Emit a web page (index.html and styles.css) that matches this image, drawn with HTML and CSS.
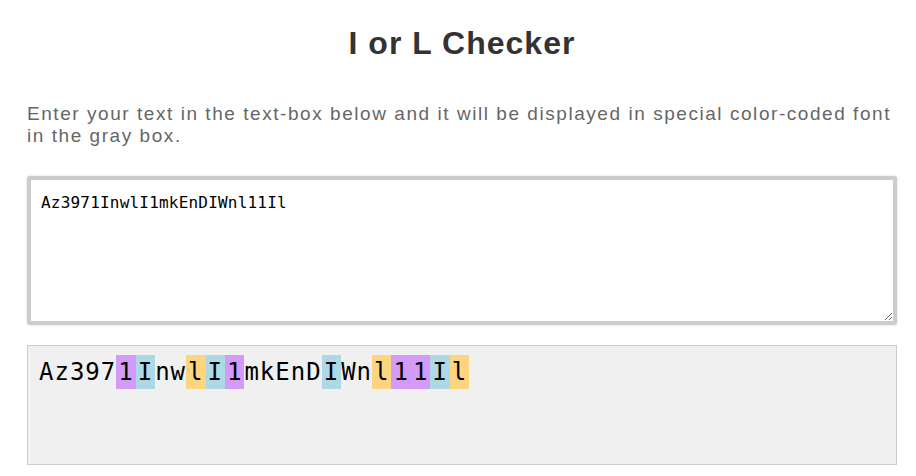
FILE: index.html
```html
<!DOCTYPE html>
<html lang="en">
<head>
<meta charset="utf-8">
<title>I or L Checker</title>
<link rel="stylesheet" href="styles.css">
</head>
<body>
<div class="page">
  <h1 class="title">I or L Checker</h1>
  <p class="intro">Enter your text in the text-box below and it will be displayed in special color-coded font in the gray box.</p>
  <textarea class="input" spellcheck="false">Az3971InwlI1mkEnDIWnl11Il</textarea>
  <div class="output">Az397<span class="one">1</span><span class="eye">I</span>nw<span class="ell">l</span><span class="eye">I</span><span class="one">1</span>mkEnD<span class="eye">I</span>Wn<span class="ell">l</span><span class="one">1</span><span class="one">1</span><span class="eye">I</span><span class="ell">l</span></div>
</div>
</body>
</html>
```
FILE: styles.css
```css
html, body {
  margin: 0;
  padding: 0;
  background: #ffffff;
}
body {
  font-family: "Liberation Sans", Arial, sans-serif;
}
.page {
  padding: 0 19px 0 27px;
}
.title {
  margin: 25px 0 0;
  text-align: center;
  font-size: 32px;
  font-weight: bold;
  letter-spacing: 1px;
  color: #333333;
  line-height: 37px;
}
.intro {
  margin: 41px 0 0;
  font-size: 19px;
  line-height: 22px;
  color: #666666;
  letter-spacing: 1.55px;
}
.input {
  display: block;
  box-sizing: border-box;
  width: 100%;
  height: 149px;
  margin: 29px 0 0;
  padding: 13px 10px;
  border: 4px solid #cccccc;
  border-radius: 3px;
  box-shadow: 0 0 3px rgba(0, 0, 0, 0.15);
  font-family: "DejaVu Sans Mono", monospace;
  font-size: 16px;
  letter-spacing: 0.2px;
  color: #000000;
  background: #ffffff;
  outline: none;
}
.output {
  box-sizing: border-box;
  height: 120px;
  margin: 20px 0 0;
  padding: 8px 11px;
  border: 1px solid #cccccc;
  background: #f0f0f0;
  font-family: "DejaVu Sans Mono", monospace;
  font-size: 24px;
  line-height: 36px;
  letter-spacing: 1px;
  color: #000000;
}
.output span {
  padding: 3px 2px;
}
.one {
  background: #d49af8;
}
.eye {
  background: #add8e6;
}
.ell {
  background: #fdd57e;
}
```
